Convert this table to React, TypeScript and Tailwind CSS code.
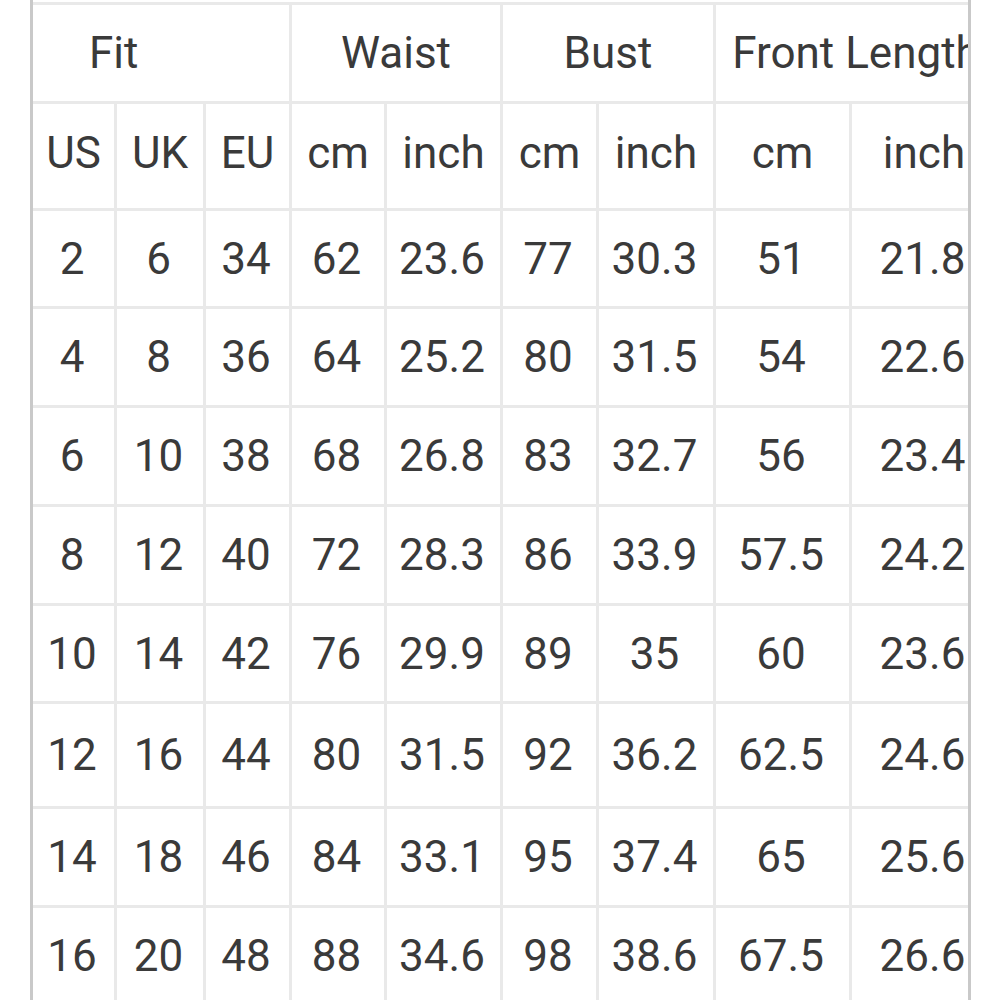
import React from "react";

// size chart rows: US, UK, EU, waist cm/inch, bust cm/inch, front length cm/inch
const rows: string[][] = [
  ["2", "6", "34", "62", "23.6", "77", "30.3", "51", "21.8"],
  ["4", "8", "36", "64", "25.2", "80", "31.5", "54", "22.6"],
  ["6", "10", "38", "68", "26.8", "83", "32.7", "56", "23.4"],
  ["8", "12", "40", "72", "28.3", "86", "33.9", "57.5", "24.2"],
  ["10", "14", "42", "76", "29.9", "89", "35", "60", "23.6"],
  ["12", "16", "44", "80", "31.5", "92", "36.2", "62.5", "24.6"],
  ["14", "18", "46", "84", "33.1", "95", "37.4", "65", "25.6"],
  ["16", "20", "48", "88", "34.6", "98", "38.6", "67.5", "26.6"],
];

const units = ["US", "UK", "EU", "cm", "inch", "cm", "inch", "cm", "inch"];

const Cell: React.FC<{ children: React.ReactNode; className?: string }> = ({ children, className = "" }) => (
  <div className={`bg-white flex items-center justify-center whitespace-nowrap ${className}`}>
    {children}
  </div>
);

const App: React.FC = () => {
  return (
    <div className="bg-white w-[999px] h-[1000px] overflow-hidden">
      <div
        className="ml-[30px] w-[941px] h-[1000px] border-x-[3px] border-[#c9c9c9] overflow-hidden text-[44px] text-[#3a3a3a]"
        style={{ fontFamily: "Roboto, 'Liberation Sans', sans-serif" }}
      >
        <div className="mt-[2px] pt-[3px] w-[963px] bg-[#e9e9e9] grid gap-[3px] grid-cols-[81px_86px_83px_92px_113px_93px_114px_133px_144px] grid-rows-[96px_104px_95px_96px_96px_96px_95px_102px_96px_96px]">
          {/* group headers */}
          <Cell className="col-span-3 !justify-start pl-[56px]">Fit</Cell>
          <Cell className="col-span-2">Waist</Cell>
          <Cell className="col-span-2">Bust</Cell>
          <Cell className="col-span-2">Front Length</Cell>

          {/* units */}
          {units.map((u, i) => (
            <Cell key={`u${i}`} className="pb-[7px]">{u}</Cell>
          ))}

          {/* sizes */}
          {rows.map((r, ri) =>
            r.map((v, ci) => <Cell key={`${ri}-${ci}`} className="pr-[3px]">{v}</Cell>)
          )}
        </div>
      </div>
    </div>
  );
};

export default App;
